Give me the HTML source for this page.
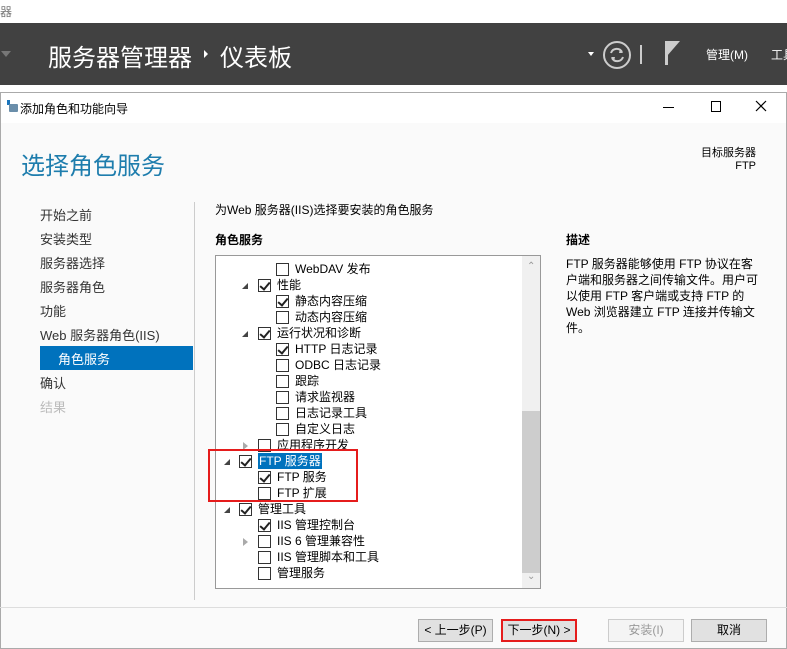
<!DOCTYPE html>
<html><head><meta charset="utf-8"><style>
*{margin:0;padding:0;box-sizing:border-box}
body{width:787px;height:649px;overflow:hidden;background:#fff;font-family:"Liberation Sans","Noto Sans CJK SC",sans-serif;font-size:12px;color:#000;position:relative}
.a{position:absolute;white-space:nowrap}
.cb{position:absolute;width:13px;height:13px;border:1px solid #333;background:#fff}
.cb.c::after{content:"";position:absolute;left:3px;top:0px;width:4px;height:8px;border:solid #222;border-width:0 2px 2px 0;transform:rotate(40deg)}
.ar{position:absolute;width:0;height:0}
.ex{border-left:6px solid transparent;border-bottom:6px solid #444}
.co{border-top:4px solid transparent;border-bottom:4px solid transparent;border-left:5px solid #aaa}
.nav{position:absolute;left:40px;font-size:13px;color:#333}
.btn{position:absolute;top:619px;height:23px;border:1px solid #adadad;background:#e1e1e1;text-align:center;line-height:21px;font-size:12px}
</style></head><body>
<div class="a" style="left:0;top:3px;color:#777;font-size:12px">器</div>
<div class="a" style="left:0;top:23px;width:787px;height:62px;background:#414141"></div>
<div class="ar" style="left:1px;top:51px;border-left:5px solid transparent;border-right:5px solid transparent;border-top:6px solid #777"></div>
<div class="a" style="left:48px;top:38px;color:#fff;font-size:24px">服务器管理器</div>
<div class="ar" style="left:204px;top:50px;border-top:4px solid transparent;border-bottom:4px solid transparent;border-left:4px solid #fff"></div>
<div class="a" style="left:220px;top:38px;color:#fff;font-size:24px">仪表板</div>
<div class="ar" style="left:588px;top:52px;border-left:3px solid transparent;border-right:3px solid transparent;border-top:4px solid #fff"></div>
<svg class="a" style="left:602px;top:40px" width="30" height="30"><circle cx="15" cy="15" r="13" fill="none" stroke="#ccc" stroke-width="2"/><path d="M9 13 A6 6 0 0 1 20 12 M21 17 A6 6 0 0 1 10 18" fill="none" stroke="#ccc" stroke-width="2"/><path d="M18 9 L21 13 L17 13Z M12 21 L9 17 L13 17Z" fill="#ccc"/></svg>
<div class="a" style="left:640px;top:45px;width:2px;height:19px;background:#ccc"></div>
<div class="a" style="left:665px;top:41px;width:3px;height:24px;background:#ccc"></div>
<svg class="a" style="left:667px;top:41px" width="14" height="16"><path d="M0 0 L13 0 L0 15 Z" fill="#ccc"/></svg>
<div class="a" style="left:706px;top:46px;color:#fff;font-size:12px">管理(M)</div>
<div class="a" style="left:771px;top:46px;color:#fff;font-size:12px">工具</div>
<div class="a" style="left:0;top:92px;width:787px;height:557px;background:#fafafa;border:1px solid #aaa"></div>
<div class="a" style="left:1px;top:93px;width:785px;height:30px;background:#fff"></div>
<div class="a" style="left:7px;top:100px;width:3px;height:5px;background:#1b75bc"></div>
<div class="a" style="left:9px;top:104px;width:9px;height:8px;background:#6a8eaa;border-radius:1px"></div>
<div class="a" style="left:20px;top:100px;font-size:12px">添加角色和功能向导</div>
<div class="a" style="left:663px;top:107px;width:11px;height:1px;background:#000"></div>
<div class="a" style="left:711px;top:101px;width:10px;height:11px;border:1px solid #000"></div>
<svg class="a" style="left:755px;top:100px" width="12" height="12"><path d="M1 1 L11 11 M11 1 L1 11" stroke="#000" stroke-width="1.2"/></svg>
<div class="a" style="left:21px;top:146px;font-size:24px;color:#1e7dad">选择角色服务</div>
<div class="a" style="left:680px;top:147px;width:76px;text-align:right;font-size:11px;line-height:13px">目标服务器<br>FTP</div>
<div class="a" style="left:194px;top:202px;width:1px;height:398px;background:#ccc"></div>
<div class="nav" style="top:205px">开始之前</div>
<div class="nav" style="top:229px">安装类型</div>
<div class="nav" style="top:253px">服务器选择</div>
<div class="nav" style="top:277px">服务器角色</div>
<div class="nav" style="top:301px">功能</div>
<div class="nav" style="top:325px">Web 服务器角色(IIS)</div>
<div class="a" style="left:40px;top:346px;width:153px;height:24px;background:#0072bd"></div>
<div class="nav" style="left:58px;top:349px;color:#fff">角色服务</div>
<div class="nav" style="top:373px">确认</div>
<div class="nav" style="top:397px;color:#bbb">结果</div>
<div class="a" style="left:215px;top:201px;font-size:12px">为Web 服务器(IIS)选择要安装的角色服务</div>
<div class="a" style="left:215px;top:231px;font-size:12px;font-weight:bold">角色服务</div>
<div class="a" style="left:566px;top:231px;font-size:12px;font-weight:bold">描述</div>
<div class="a" style="left:566px;top:256px;font-size:12px;line-height:16px">FTP 服务器能够使用 FTP 协议在客<br>户端和服务器之间传输文件。用户可<br>以使用 FTP 客户端或支持 FTP 的<br>Web 浏览器建立 FTP 连接并传输文<br>件。</div>
<div class="a" style="left:215px;top:255px;width:326px;height:334px;border:1px solid #999;background:#fff;overflow:hidden">
 <div class="a" style="left:306px;top:0;width:18px;height:332px;background:#f0f0f0"></div>
 <div class="a" style="left:306px;top:155px;width:18px;height:162px;background:#cdcdcd"></div>
 <div class="a" style="left:311px;top:5px;color:#999;font-size:10px">⌃</div>
 <div class="a" style="left:311px;top:315px;color:#999;font-size:10px">⌄</div>
</div>
<div id="tree"></div>
<div class="a" style="left:208px;top:449px;width:150px;height:53px;border:2px solid #e51c1c"></div>
<div class="a" style="left:0;top:607px;width:787px;height:1px;background:#ddd"></div>
<div class="btn" style="left:418px;width:75px">&lt; 上一步(P)</div>
<div class="btn" style="left:501px;width:76px;border:2px solid #e51c1c;line-height:19px">下一步(N) &gt;</div>
<div class="btn" style="left:608px;width:76px;background:#f4f4f4;border-color:#ccc;color:#999">安装(I)</div>
<div class="btn" style="left:691px;width:76px">取消</div>
<script>
var R=[[3,0,0,"WebDAV 发布"],[2,1,1,"性能"],[3,0,1,"静态内容压缩"],[3,0,0,"动态内容压缩"],[2,1,1,"运行状况和诊断"],[3,0,1,"HTTP 日志记录"],[3,0,0,"ODBC 日志记录"],[3,0,0,"跟踪"],[3,0,0,"请求监视器"],[3,0,0,"日志记录工具"],[3,0,0,"自定义日志"],[2,2,0,"应用程序开发"],[1,1,1,"FTP 服务器"],[2,0,1,"FTP 服务"],[2,0,0,"FTP 扩展"],[1,1,1,"管理工具"],[2,0,1,"IIS 管理控制台"],[2,2,0,"IIS 6 管理兼容性"],[2,0,0,"IIS 管理脚本和工具"],[2,0,0,"管理服务"]];
var cx={1:239,2:258,3:276},ax={1:224,2:242},h="";
R.forEach(function(r,i){var y=269+16*i;var x=cx[r[0]];
h+='<div class="cb'+(r[2]?' c':'')+'" style="left:'+x+'px;top:'+(y-6)+'px"></div>';
if(r[1]==1)h+='<div class="ar ex" style="left:'+ax[r[0]]+'px;top:'+(y-2)+'px"></div>';
if(r[1]==2)h+='<div class="ar co" style="left:'+(ax[r[0]]+1)+'px;top:'+(y-3)+'px"></div>';
var sel=(i==12)?'background:#0072bd;color:#fff;padding:0 1px;':'';
h+='<div class="a" style="left:'+(x+19)+'px;top:'+(y-8)+'px;line-height:16px;font-size:12px;'+sel+'">'+r[3]+'</div>';});
document.getElementById('tree').innerHTML=h;
</script>
</body></html>
